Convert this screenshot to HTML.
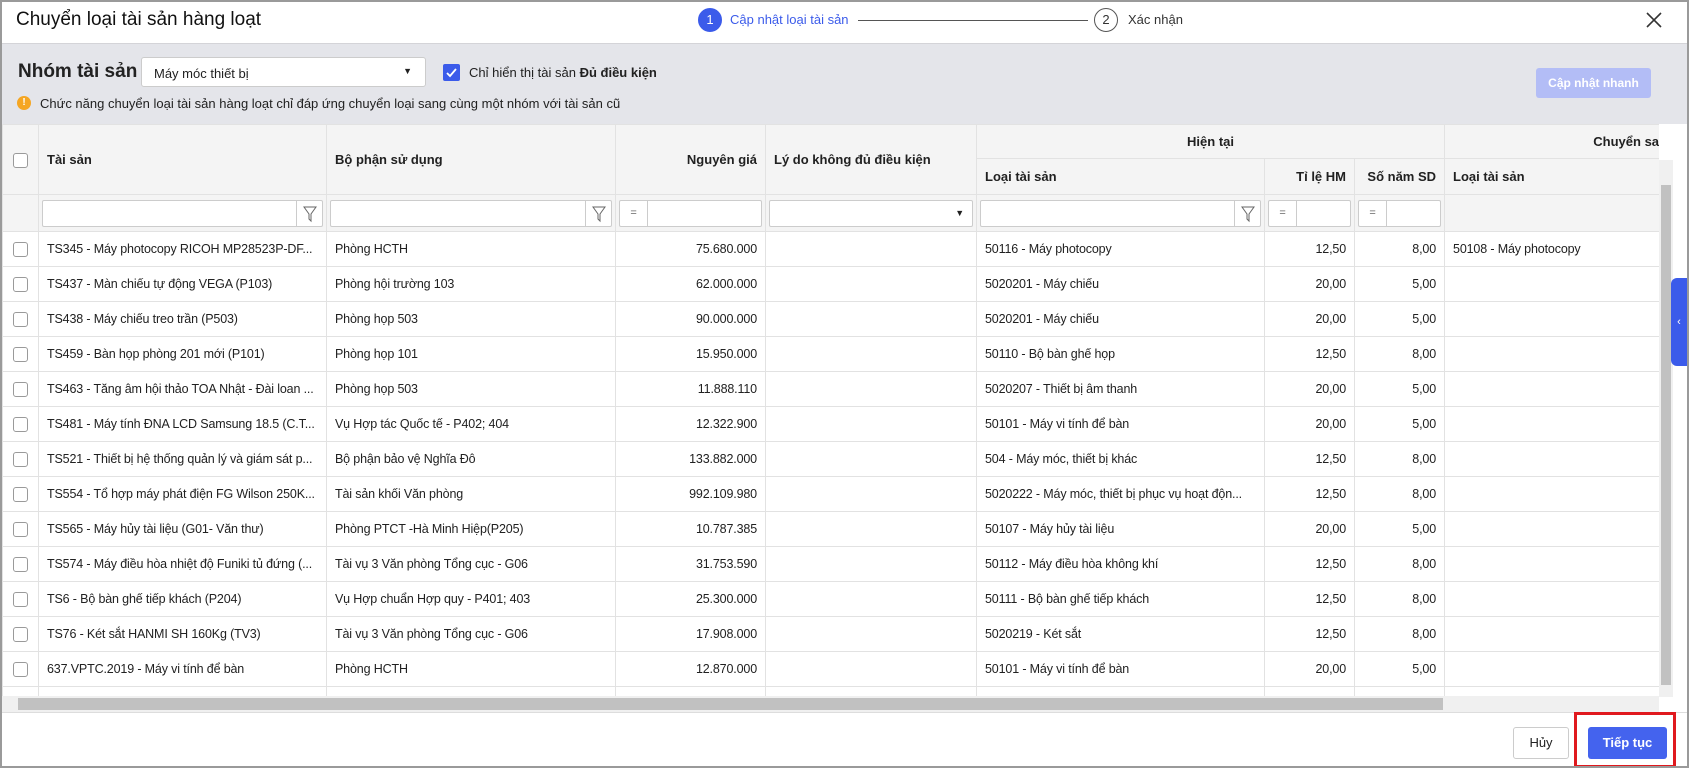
<!DOCTYPE html><html><head><meta charset="utf-8"><style>
*{box-sizing:border-box;margin:0;padding:0}
body{width:1689px;height:768px;overflow:hidden;background:#fff;font-family:"Liberation Sans",sans-serif;font-size:13px;color:#212121;position:relative}
.frame{position:absolute;left:0;top:0;width:1689px;height:768px;border:2px solid #9a9a9a;z-index:5;pointer-events:none}
.abs{position:absolute}
.title{left:16px;top:9px;font-size:19px;color:#111}
.step{width:24px;height:24px;border-radius:50%;text-align:center;line-height:22px;font-size:13px}
.tb{left:2px;top:43px;width:1685px;height:81px;background:#e4e5ea;border-top:1px solid #d4d4d8}
.wrap{position:absolute;left:2px;top:124px;width:1657px;height:572px;overflow:hidden}
table{border-collapse:collapse;table-layout:fixed;width:1657px}
td,th{border:1px solid #e2e2e2;white-space:nowrap;overflow:hidden;text-overflow:ellipsis;padding:0 8px}
th{background:#f4f4f4;font-weight:bold;text-align:left;font-size:13px}
td{height:35px;font-size:12.5px;letter-spacing:-0.15px}
.r{text-align:right}
.cb{display:inline-block;width:15px;height:15px;border:1px solid #9a9a9a;border-radius:3px;background:#fff;vertical-align:middle}
.in{height:27px;border:1px solid #ccc;background:#fff;border-radius:2px;position:relative}
.fil{position:absolute;right:0;top:0;width:26px;height:25px;border-left:1px solid #ccc}
.eq{position:absolute;left:0;top:0;width:28px;height:25px;border-right:1px solid #ccc;text-align:center;line-height:25px;color:#666;font-size:11px}
</style></head><body>
<div class="frame"></div>
<div class="abs title">Chuyển loại tài sản hàng loạt</div>
<div class="abs step" style="left:698px;top:8px;background:#3b5bea;color:#fff;border:1px solid #3b5bea">1</div>
<div class="abs" style="left:730px;top:12px;color:#3b5bea;font-size:13px">Cập nhật loại tài sản</div>
<div class="abs" style="left:858px;top:20px;width:230px;height:1px;background:#555"></div>
<div class="abs step" style="left:1094px;top:8px;border:1px solid #555;color:#333">2</div>
<div class="abs" style="left:1128px;top:12px;color:#333;font-size:13px">Xác nhận</div>
<svg class="abs" style="left:1645px;top:11px" width="18" height="18"><path d="M2 2L16 16M16 2L2 16" stroke="#333" stroke-width="1.6"/></svg>
<div class="abs tb"></div>
<div class="abs" style="left:18px;top:61px;font-size:19px;font-weight:bold;color:#222">Nhóm tài sản</div>
<div class="abs" style="left:141px;top:57px;width:285px;height:30px;background:#fff;border:1px solid #ccc;border-radius:3px;padding:8px 12px">Máy móc thiết bị<span style="position:absolute;right:13px;top:8px;font-size:9px">▼</span></div>
<div class="abs" style="left:443px;top:64px;width:17px;height:17px;background:#3b5bea;border-radius:2px"><svg width="17" height="17"><path d="M4 9l3 3 6-7" stroke="#fff" stroke-width="1.8" fill="none"/></svg></div>
<div class="abs" style="left:469px;top:65px">Chỉ hiển thị tài sản <b>Đủ điều kiện</b></div>
<div class="abs" style="left:17px;top:96px;width:14px;height:14px;border-radius:50%;background:#f5a623;color:#fff;font-size:10px;font-weight:bold;text-align:center;line-height:14px">!</div>
<div class="abs" style="left:40px;top:96px">Chức năng chuyển loại tài sản hàng loạt chỉ đáp ứng chuyển loại sang cùng một nhóm với tài sản cũ</div>
<div class="abs" style="left:1536px;top:68px;width:115px;height:30px;background:#b3bdf6;border-radius:3px;color:#fff;font-weight:bold;text-align:center;line-height:30px;font-size:12px">Cập nhật nhanh</div>
<div class="wrap"><table>
<colgroup><col style="width:36px"><col style="width:288px"><col style="width:289px"><col style="width:150px"><col style="width:211px"><col style="width:288px"><col style="width:90px"><col style="width:90px"><col style="width:215px"></colgroup>
<tr style="height:34px"><th rowspan="2" style="padding:0 0 0 10px"><span class="cb"></span></th><th rowspan="2">Tài sản</th><th rowspan="2">Bộ phận sử dụng</th><th rowspan="2" class="r">Nguyên giá</th><th rowspan="2">Lý do không đủ điều kiện</th><th colspan="3" style="text-align:center">Hiện tại</th><th style="text-align:right;padding-right:0">Chuyển sa</th></tr>
<tr style="height:36px"><th>Loại tài sản</th><th class="r">Tỉ lệ HM</th><th class="r">Số năm SD</th><th>Loại tài sản</th></tr>
<tr style="height:37px;background:#f4f4f4"><td></td><td style="padding:0 3px"><div class="in"><div class="fil"><svg width="26" height="25"><path d="M7 6h12l-5 7v7l-2-2v-5z" fill="none" stroke="#666"/></svg></div></div></td><td style="padding:0 3px"><div class="in"><div class="fil"><svg width="26" height="25"><path d="M7 6h12l-5 7v7l-2-2v-5z" fill="none" stroke="#666"/></svg></div></div></td><td style="padding:0 3px"><div class="in"><div class="eq">=</div></div></td><td style="padding:0 3px"><div class="in"><span style="position:absolute;right:8px;top:7px;font-size:9px">▼</span></div></td><td style="padding:0 3px"><div class="in"><div class="fil"><svg width="26" height="25"><path d="M7 6h12l-5 7v7l-2-2v-5z" fill="none" stroke="#666"/></svg></div></div></td><td style="padding:0 3px"><div class="in"><div class="eq">=</div></div></td><td style="padding:0 3px"><div class="in"><div class="eq">=</div></div></td><td></td></tr>
<tr><td style="padding-left:10px"><span class="cb"></span></td><td>TS345 - Máy photocopy RICOH MP28523P-DF...</td><td>Phòng HCTH</td><td class="r">75.680.000</td><td></td><td>50116 - Máy photocopy</td><td class="r">12,50</td><td class="r">8,00</td><td>50108 - Máy photocopy</td></tr>
<tr><td style="padding-left:10px"><span class="cb"></span></td><td>TS437 - Màn chiếu tự động VEGA (P103)</td><td>Phòng hội trường 103</td><td class="r">62.000.000</td><td></td><td>5020201 - Máy chiếu</td><td class="r">20,00</td><td class="r">5,00</td><td></td></tr>
<tr><td style="padding-left:10px"><span class="cb"></span></td><td>TS438 - Máy chiếu treo trần (P503)</td><td>Phòng họp 503</td><td class="r">90.000.000</td><td></td><td>5020201 - Máy chiếu</td><td class="r">20,00</td><td class="r">5,00</td><td></td></tr>
<tr><td style="padding-left:10px"><span class="cb"></span></td><td>TS459 - Bàn họp phòng 201 mới (P101)</td><td>Phòng họp 101</td><td class="r">15.950.000</td><td></td><td>50110 - Bộ bàn ghế họp</td><td class="r">12,50</td><td class="r">8,00</td><td></td></tr>
<tr><td style="padding-left:10px"><span class="cb"></span></td><td>TS463 - Tăng âm hội thảo TOA Nhật - Đài loan ...</td><td>Phòng họp 503</td><td class="r">11.888.110</td><td></td><td>5020207 - Thiết bị âm thanh</td><td class="r">20,00</td><td class="r">5,00</td><td></td></tr>
<tr><td style="padding-left:10px"><span class="cb"></span></td><td>TS481 - Máy tính ĐNA LCD Samsung 18.5 (C.T...</td><td>Vụ Hợp tác Quốc tế - P402; 404</td><td class="r">12.322.900</td><td></td><td>50101 - Máy vi tính để bàn</td><td class="r">20,00</td><td class="r">5,00</td><td></td></tr>
<tr><td style="padding-left:10px"><span class="cb"></span></td><td>TS521 - Thiết bị hệ thống quản lý và giám sát p...</td><td>Bộ phận bảo vệ Nghĩa Đô</td><td class="r">133.882.000</td><td></td><td>504 - Máy móc, thiết bị khác</td><td class="r">12,50</td><td class="r">8,00</td><td></td></tr>
<tr><td style="padding-left:10px"><span class="cb"></span></td><td>TS554 - Tổ hợp máy phát điện FG Wilson 250K...</td><td>Tài sản khối Văn phòng</td><td class="r">992.109.980</td><td></td><td>5020222 - Máy móc, thiết bị phục vụ hoạt độn...</td><td class="r">12,50</td><td class="r">8,00</td><td></td></tr>
<tr><td style="padding-left:10px"><span class="cb"></span></td><td>TS565 - Máy hủy tài liệu (G01- Văn thư)</td><td>Phòng PTCT -Hà Minh Hiệp(P205)</td><td class="r">10.787.385</td><td></td><td>50107 - Máy hủy tài liệu</td><td class="r">20,00</td><td class="r">5,00</td><td></td></tr>
<tr><td style="padding-left:10px"><span class="cb"></span></td><td>TS574 - Máy điều hòa nhiệt độ Funiki tủ đứng (...</td><td>Tài vụ 3 Văn phòng Tổng cục - G06</td><td class="r">31.753.590</td><td></td><td>50112 - Máy điều hòa không khí</td><td class="r">12,50</td><td class="r">8,00</td><td></td></tr>
<tr><td style="padding-left:10px"><span class="cb"></span></td><td>TS6 - Bộ bàn ghế tiếp khách (P204)</td><td>Vụ Hợp chuẩn Hợp quy - P401; 403</td><td class="r">25.300.000</td><td></td><td>50111 - Bộ bàn ghế tiếp khách</td><td class="r">12,50</td><td class="r">8,00</td><td></td></tr>
<tr><td style="padding-left:10px"><span class="cb"></span></td><td>TS76 - Két sắt HANMI SH 160Kg (TV3)</td><td>Tài vụ 3 Văn phòng Tổng cục - G06</td><td class="r">17.908.000</td><td></td><td>5020219 - Két sắt</td><td class="r">12,50</td><td class="r">8,00</td><td></td></tr>
<tr><td style="padding-left:10px"><span class="cb"></span></td><td>637.VPTC.2019 - Máy vi tính để bàn</td><td>Phòng HCTH</td><td class="r">12.870.000</td><td></td><td>50101 - Máy vi tính để bàn</td><td class="r">20,00</td><td class="r">5,00</td><td></td></tr>
<tr><td></td><td></td><td></td><td></td><td></td><td></td><td></td><td></td><td></td></tr>
</table></div>
<div class="abs" style="left:1659px;top:160px;width:14px;height:537px;background:#f0f0f0"></div>
<div class="abs" style="left:1661px;top:185px;width:10px;height:500px;background:#c1c1c1"></div>
<div class="abs" style="left:2px;top:696px;width:1657px;height:16px;background:#f0f0f0"></div>
<div class="abs" style="left:18px;top:698px;width:1425px;height:12px;background:#c1c1c1"></div>
<div class="abs" style="left:2px;top:712px;width:1685px;height:1px;background:#ddd"></div>
<div class="abs" style="left:1671px;top:278px;width:16px;height:88px;background:#3b5bea;border-radius:6px 0 0 6px;color:#fff;font-size:11px;line-height:88px;text-align:center">‹</div>
<div class="abs" style="left:1513px;top:727px;width:56px;height:32px;border:1px solid #ccc;border-radius:3px;text-align:center;line-height:30px">Hủy</div>
<div class="abs" style="left:1574px;top:712px;width:102px;height:56px;border:3px solid #e0191e"></div>
<div class="abs" style="left:1588px;top:727px;width:79px;height:32px;background:#4463ee;border-radius:3px;color:#fff;font-weight:bold;text-align:center;line-height:32px">Tiếp tục</div>
</body></html>
